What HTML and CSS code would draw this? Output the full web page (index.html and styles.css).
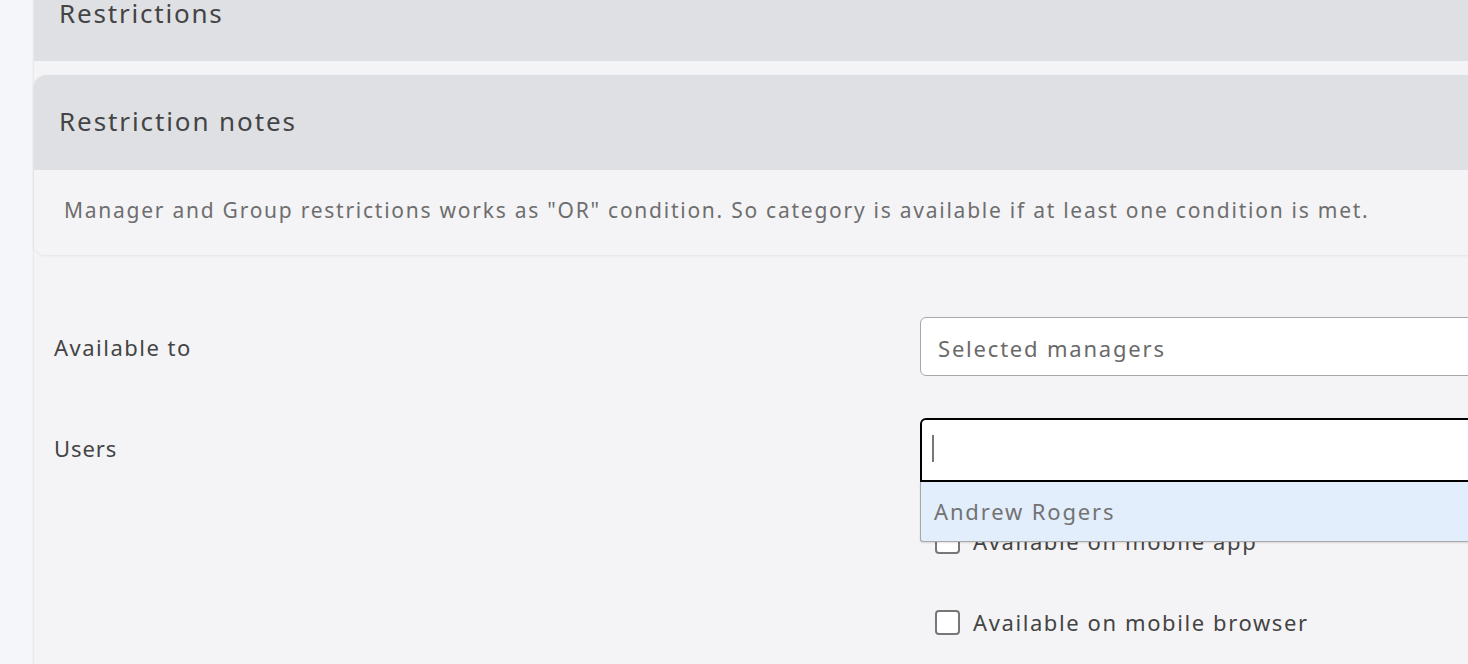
FILE: index.html
```html
<!DOCTYPE html>
<html lang="en">
<head>
<meta charset="utf-8">
<title>Restrictions</title>
<link rel="stylesheet" href="styles.css">
</head>
<body>
<div class="shell">
  <aside class="sidebar"></aside>
  <main class="main">
    <div class="section-head"><h2 class="section-title">Restrictions</h2></div>
    <section class="card">
      <header class="card-head"><h3 class="card-title">Restriction notes</h3></header>
      <div class="card-body">
        <p class="note">Manager and Group restrictions works as "OR" condition. So category is available if at least one condition is met.</p>
      </div>
    </section>
    <div class="form">
      <div class="row row-available">
        <div class="label">Available to</div>
        <div class="control">
          <div class="select">Selected managers</div>
        </div>
      </div>
      <div class="row row-users">
        <div class="label label-users">Users</div>
        <div class="control">
          <div class="combo">
            <div class="combo-input"><span class="caret"></span></div>
            <div class="dropdown"><div class="option">Andrew Rogers</div></div>
          </div>
          <div class="checks">
            <label class="check"><span class="box"></span><span>Available on mobile app</span></label>
            <label class="check"><span class="box"></span><span>Available on mobile browser</span></label>
          </div>
        </div>
      </div>
    </div>
  </main>
</div>
</body>
</html>
```
FILE: styles.css
```css
html, body {
  margin: 0;
  padding: 0;
  height: 100%;
  overflow: hidden;
  background: #f5f6fa;
  font-family: "Noto Sans", "Open Sans", sans-serif;
}
.shell {
  display: flex;
  width: 1560px;
  height: 664px;
}
.sidebar {
  width: 34px;
  flex: none;
  background: #f5f6fa;
}
.main {
  flex: 1;
  background: #f4f4f6;
  box-shadow: -1px 0 2px rgba(0, 0, 0, 0.07);
  position: relative;
}
.section-head {
  height: 61px;
  background: #dfe0e4;
  padding-left: 25px;
}
.section-title {
  margin: 0;
  font-weight: 400;
  font-size: 26px;
  line-height: 27px;
  color: #444;
  letter-spacing: 1.8px;
}
.card {
  margin-top: 14px;
  border-radius: 12px 0 0 12px;
  overflow: hidden;
  box-shadow: 0 1px 3px rgba(0, 0, 0, 0.07);
}
.card-head {
  height: 95px;
  background: #dfe0e4;
  padding-left: 25px;
  padding-bottom: 3px;
  box-sizing: border-box;
  display: flex;
  align-items: center;
}
.card-title {
  margin: 0;
  font-weight: 400;
  font-size: 26px;
  color: #444;
  letter-spacing: 1.9px;
}
.card-body {
  height: 85px;
  padding-left: 30px;
  padding-bottom: 6px;
  box-sizing: border-box;
  display: flex;
  align-items: center;
  background: #f4f4f6;
}
.note {
  margin: 0;
  font-size: 21px;
  color: #6e6e6e;
  letter-spacing: 1.75px;
}
.form {
  padding: 62px 0 0 20px;
}
.row {
  display: grid;
  grid-template-columns: 866px 1fr;
  align-items: start;
}
.label {
  font-size: 22px;
  color: #444;
  letter-spacing: 1.5px;
}
.label-users {
  letter-spacing: 0.9px;
}
.row-available .label {
  line-height: 60px;
}
.row-users {
  margin-top: 41px;
}
.row-users .label {
  line-height: 60px;
}
.select {
  height: 55px;
  border: 1px solid #a8a8a8;
  border-radius: 6px;
  background: #fff;
  padding-left: 17px;
  padding-top: 2px;
  display: flex;
  align-items: center;
  font-size: 22px;
  color: #6a6a6a;
  letter-spacing: 1.8px;
}
.combo {
  position: relative;
  height: 64px;
}
.combo-input {
  height: 64px;
  border: 2px solid #000;
  border-radius: 6px 0 0 0;
  background: #fff;
  padding-left: 10px;
  padding-bottom: 4px;
  box-sizing: border-box;
  display: flex;
  align-items: center;
}
.caret {
  display: inline-block;
  width: 2px;
  height: 27px;
  background: #777;
}
.dropdown {
  position: absolute;
  left: 0;
  right: 0;
  top: 64px;
  height: 59px;
  background: #e2eefc;
  border-left: 1px solid #a9a9a9;
  border-bottom: 1px solid #a9a9a9;
  border-radius: 0 0 0 3px;
  box-shadow: 0 1px 2px rgba(0, 0, 0, 0.12);
  z-index: 2;
}
.option {
  padding-left: 13px;
  line-height: 59px;
  font-size: 22px;
  color: #737373;
  letter-spacing: 1.85px;
}
.checks {
  display: flex;
  flex-direction: column;
  gap: 55px;
  padding-top: 46px;
  padding-left: 15px;
}
.check {
  display: flex;
  align-items: center;
  gap: 13px;
  font-size: 22px;
  color: #444;
  letter-spacing: 1.6px;
  height: 26px;
}
.box {
  width: 21px;
  height: 21px;
  border: 2px solid #777;
  border-radius: 4px;
  background: #fff;
  flex: none;
}
```
